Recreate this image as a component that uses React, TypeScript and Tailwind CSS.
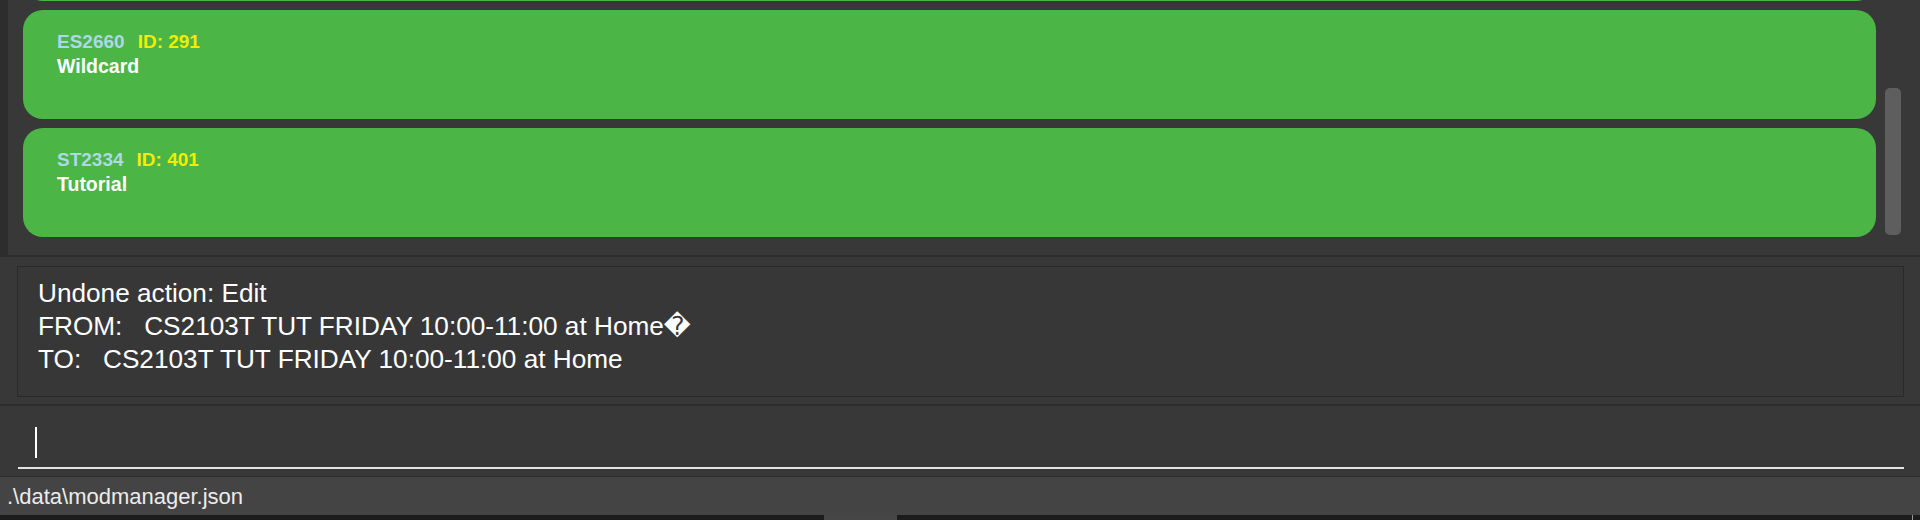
import React from 'react';

type Mod = { code: string; id: string; type: string };

const mods: Mod[] = [
  { code: 'ES2660', id: 'ID: 291', type: 'Wildcard' },
  { code: 'ST2334', id: 'ID: 401', type: 'Tutorial' },
];

const ModCard: React.FC<{ mod: Mod }> = ({ mod }) => (
  <div className="h-[109px] shrink-0 rounded-[20px] bg-[#4bb546] pl-[34px] pt-[20px] font-bold">
    <div className="flex gap-[13px] text-[19px] leading-[24px]">
      <span className="text-[#add8e6]">{mod.code}</span>
      <span className="text-[#f3ed00]">{mod.id}</span>
    </div>
    <div className="text-[19.5px] leading-[24px] text-white">{mod.type}</div>
  </div>
);

const App: React.FC = () => {
  return (
    <div className="flex h-[520px] w-[1920px] flex-col overflow-hidden bg-[#383838] font-['Liberation_Sans',Arial,'DejaVu_Sans',sans-serif]">
      {/* Module list (scrolled) */}
      <div className="relative h-[257px] shrink-0 overflow-hidden border-b-2 border-l-[8px] border-[#2d2d2d] bg-[#383838]">
        <div className="mt-[-108px] flex flex-col gap-[9px] pl-[15px] pr-[44px]">
          {/* card scrolled out of view above */}
          <div className="h-[109px] shrink-0 rounded-[20px] bg-[#4bb546]" />
          {mods.map((m) => (
            <ModCard key={m.code} mod={m} />
          ))}
        </div>
        <div className="absolute left-[1877px] top-[88px] h-[147px] w-[16px] rounded-[5px] bg-[#5e5e5e]" />
      </div>

      {/* Result display */}
      <div className="h-[149px] shrink-0 border-b-2 border-[#2d2d2d] pb-[7px] pl-[17px] pr-[16px] pt-[9px]">
        <div className="h-full border border-[#2a2a2a] bg-[#373737] pl-[20px] pt-[10px] text-[26.2px] leading-[33px] whitespace-pre text-white">
          <div>Undone action: Edit</div>
          <div>FROM:   CS2103T TUT FRIDAY 10:00-11:00 at Home{'\uFFFD'}</div>
          <div>TO:   CS2103T TUT FRIDAY 10:00-11:00 at Home</div>
        </div>
      </div>

      {/* Command box */}
      <div className="h-[71px] shrink-0 border-b border-[#2d2d2d] pl-[18px] pr-[16px] pt-[21px]">
        <div className="ml-[17px] h-[31px] w-[2px] bg-white" />
        <div className="mt-[9px] h-[2px] bg-[#e4e4e4]" />
      </div>

      {/* Status bar */}
      <div className="flex h-[38px] shrink-0 items-center bg-[#444444] pl-[7px] text-[22px] text-[#ececec]">
        .\data\modmanager.json
      </div>

      {/* Bottom strip */}
      <div className="relative h-[5px] shrink-0 bg-[#1c1c1c]">
        <div className="absolute left-[824px] top-0 h-[5px] w-[73px] bg-[#464646]" />
        <div className="absolute left-[1912px] top-0 h-[5px] w-[1px] bg-[#9a9a9a]" />
      </div>
    </div>
  );
};

export default App;
